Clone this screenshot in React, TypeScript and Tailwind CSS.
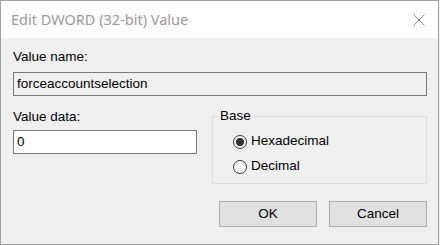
import React from "react";

function Radio({ checked, label }: { checked: boolean; label: string }) {
  return (
    <div className="flex items-center h-[25px]">
      <div className="w-[14px] h-[14px] rounded-full border border-[#333333] bg-white flex items-center justify-center">
        {checked && <div className="w-[8px] h-[8px] rounded-full bg-[#333333]" />}
      </div>
      <span className="ml-[4px]">{label}</span>
    </div>
  );
}

export default function App() {
  return (
    <div
      className="w-[440px] h-[245px] bg-[#f0f0f0] text-black"
      style={{ fontFamily: '"Liberation Sans", Arial, sans-serif' }}
    >
      <div className="w-[439px] h-[245px] border border-[#a0a0a0] flex flex-col">
        <div className="h-[37px] bg-white flex items-center justify-between pl-[10px] pr-[13px]">
          <span
            className="text-[14.5px] text-[#999999]"
            style={{ fontFamily: '"Noto Sans", "Open Sans", sans-serif' }}
          >
            Edit DWORD (32-bit) Value
          </span>
          <svg width="12" height="12" viewBox="0 0 12 12">
            <path d="M0.5 0.5 L11.5 11.5 M11.5 0.5 L0.5 11.5" stroke="#8a8a8a" strokeWidth="1" fill="none" />
          </svg>
        </div>
        <div className="flex-1 bg-[#f0f0f0] pl-[12px] pr-[11px] pt-[11px] text-[13.5px]">
          <div className="h-[16px] leading-[16px]">Value name:</div>
          <div className="mt-[7px] h-[24px] border border-[#7a7a7a] bg-[#f0f0f0] flex items-center pl-[3px]">
            forceaccountselection
          </div>
          <div className="mt-[13px] flex">
            <div className="w-[184px]">
              <div className="h-[16px] leading-[16px]">Value data:</div>
              <div className="mt-[5px] h-[24px] border border-[#7a7a7a] bg-white flex items-center pl-[3px]">
                0
              </div>
            </div>
            <div className="ml-[15px] flex-1 mt-[7px] relative">
              <div className="h-[68px] border border-[#dcdcdc] pl-[20px] pt-[12px]">
                <Radio checked label="Hexadecimal" />
                <Radio checked={false} label="Decimal" />
              </div>
              <div className="absolute left-[6px] top-[-8px] px-[2px] bg-[#f0f0f0] leading-[16px]">Base</div>
            </div>
          </div>
          <div className="mt-[17px] flex justify-end gap-[12px]">
            <div className="w-[98px] h-[26px] bg-[#e1e1e1] border border-[#adadad] flex items-center justify-center">
              OK
            </div>
            <div className="w-[98px] h-[26px] bg-[#e1e1e1] border border-[#adadad] flex items-center justify-center">
              Cancel
            </div>
          </div>
        </div>
      </div>
    </div>
  );
}
